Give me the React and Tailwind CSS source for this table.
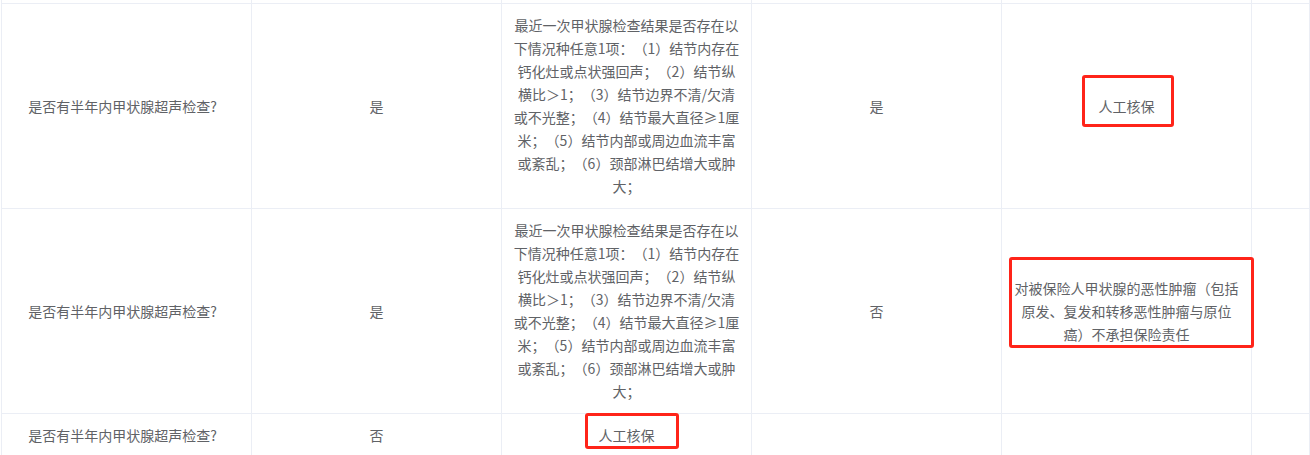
const detailLines = [
  '最近一次甲状腺检查结果是否存在以',
  '下情况种任意1项：（1）结节内存在',
  '钙化灶或点状强回声；（2）结节纵',
  '横比＞1；（3）结节边界不清/欠清',
  '或不光整；（4）结节最大直径≥1厘',
  '米；（5）结节内部或周边血流丰富',
  '或紊乱；（6）颈部淋巴结增大或肿',
  '大；',
]

const rows = [
  {
    question: '是否有半年内甲状腺超声检查?',
    answer: '是',
    detail: detailLines,
    detailAnswer: '是',
    result: ['人工核保'],
    mark: 'result-short',
  },
  {
    question: '是否有半年内甲状腺超声检查?',
    answer: '是',
    detail: detailLines,
    detailAnswer: '否',
    result: ['对被保险人甲状腺的恶性肿瘤（包括', '原发、复发和转移恶性肿瘤与原位', '癌）不承担保险责任'],
    mark: 'result-long',
  },
  {
    question: '是否有半年内甲状腺超声检查?',
    answer: '否',
    detail: ['人工核保'],
    detailAnswer: '',
    result: [],
    mark: 'detail',
  },
]

function Cell({ children, className = '' }) {
  return (
    <div className={`relative flex items-center justify-center text-center px-3 py-2.5 border-r border-b border-[#ebeef5] ${className}`}>
      {children}
    </div>
  )
}

function Lines({ lines }) {
  return (
    <div>
      {lines.map((l, i) => (
        <div key={i} className="whitespace-nowrap">{l}</div>
      ))}
    </div>
  )
}

function Mark({ className }) {
  return <div className={`pointer-events-none absolute border-[3px] border-[#ff2419] rounded-[3px] ${className}`} />
}

export default function App() {
  return (
    <div
      className="w-[1310px] h-[455px] overflow-hidden bg-white text-[14px] leading-[23px] text-[#606266] [text-spacing-trim:space-all]"
      style={{ fontFamily: '"Noto Sans CJK SC", "Noto Sans", sans-serif' }}
    >
      <div className="ml-px border-l border-[#ebeef5] grid grid-cols-[250px_250px_250px_250px_250px_1fr]">
        {[0, 1, 2, 3, 4, 5].map(i => (
          <div key={i} className="h-[4px] border-r border-b border-[#ebeef5]" />
        ))}

        {rows.map((r, i) => (
          <div key={i} className="contents">
            <Cell><span className="-ml-2">{r.question}</span></Cell>
            <Cell>{r.answer}</Cell>
            <Cell>
              <Lines lines={r.detail} />
              {r.mark === 'detail' && <Mark className="left-[83px] top-[-1px] w-[94px] h-[36px]" />}
            </Cell>
            <Cell>{r.detailAnswer}</Cell>
            <Cell className="overflow-visible">
              <Lines lines={r.result} />
              {r.mark === 'result-short' && <Mark className="left-[80px] top-[71px] w-[92px] h-[52px]" />}
              {r.mark === 'result-long' && <Mark className="left-[7px] top-[48px] w-[245px] h-[91px] z-10" />}
            </Cell>
            <Cell />
          </div>
        ))}
      </div>
    </div>
  )
}
